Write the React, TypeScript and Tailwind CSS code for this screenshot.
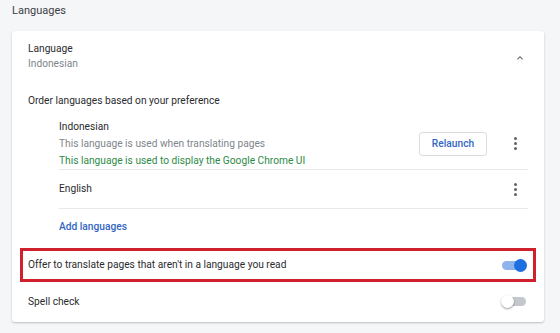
import React from 'react';

const Toggle: React.FC<{ on: boolean }> = ({ on }) => (
    <div className="relative w-[23px] h-[13px] flex items-center">
        <div className={`w-full h-[9px] rounded-full ${on ? 'bg-[#8fb3ea]' : 'bg-[#c4c7cb]'}`} />
        <div
            className={`absolute top-0 w-[13px] h-[13px] rounded-full ${
                on ? 'right-[-2px] bg-[#1e6fe0]' : 'left-[-2px] bg-white shadow-[0_1px_2px_rgba(0,0,0,0.4)]'
            }`}
        />
    </div>
);

const Kebab: React.FC = () => (
    <div className="w-[24px] flex flex-col items-center gap-[2px]">
        <span className="w-[3px] h-[3px] rounded-full bg-[#5f6368]" />
        <span className="w-[3px] h-[3px] rounded-full bg-[#5f6368]" />
        <span className="w-[3px] h-[3px] rounded-full bg-[#5f6368]" />
    </div>
);

const App: React.FC = () => {
    return (
        <div className="w-[560px] h-[333px] bg-[#f4f6f8] overflow-hidden font-['Roboto',sans-serif] text-[10.2px] text-[#2a2b2e]">
            <div className="h-[31px] pl-[12px] pt-[3px] text-[11px] text-[#3c4043]">Languages</div>

            <div className="ml-[12px] w-[532px] h-[291px] bg-white rounded-[3px] shadow-[0_1px_2px_rgba(60,64,67,0.3)] pt-[10px]">
                {/* header */}
                <div className="flex items-center justify-between pl-[16px] pr-[18px] h-[30px]">
                    <div className="leading-[15px]">
                        <div>Language</div>
                        <div className="text-[#80868b]">Indonesian</div>
                    </div>
                    <svg width="12" height="12" viewBox="0 0 24 24" className="mt-[3px]">
                        <path d="M7.4 15.4 12 10.8l4.6 4.6L18 14l-6-6-6 6z" fill="#5f6368" />
                    </svg>
                </div>

                <div className="pl-[16px] mt-[22px] leading-[15px]">Order languages based on your preference</div>

                {/* language list */}
                <div className="ml-[47px] mr-[16px] mt-[10px]">
                    <div className="flex items-center justify-between border-b border-[#e8eaed]">
                        <div className="leading-[17px]">
                            <div>Indonesian</div>
                            <div className="text-[#80868b]">This language is used when translating pages</div>
                            <div className="text-[#2e8a47]">This language is used to display the Google Chrome UI</div>
                        </div>
                        <div className="flex items-center gap-[16px] pr-[1px]">
                            <button className="w-[68px] h-[24px] border border-[#dadce0] rounded-[3px] text-[#3366c4] font-medium text-[10.2px]">
                                Relaunch
                            </button>
                            <Kebab />
                        </div>
                    </div>
                    <div className="flex items-center justify-between h-[39px] border-b border-[#e8eaed]">
                        <div>English</div>
                        <div className="pr-[1px]">
                            <Kebab />
                        </div>
                    </div>
                    <div className="h-[35px] flex items-center text-[#3366c4] font-medium">Add languages</div>
                </div>

                {/* translate offer */}
                <div className="mx-[8px] mt-[4px] h-[34px] border-[3px] border-[#d0202e] flex items-center justify-between pl-[5px] pr-[8px]">
                    <div>Offer to translate pages that aren't in a language you read</div>
                    <Toggle on />
                </div>

                <div className="h-[39px] flex items-center justify-between pl-[16px] pr-[18px]">
                    <div>Spell check</div>
                    <Toggle on={false} />
                </div>
            </div>
        </div>
    );
};

export default App;
